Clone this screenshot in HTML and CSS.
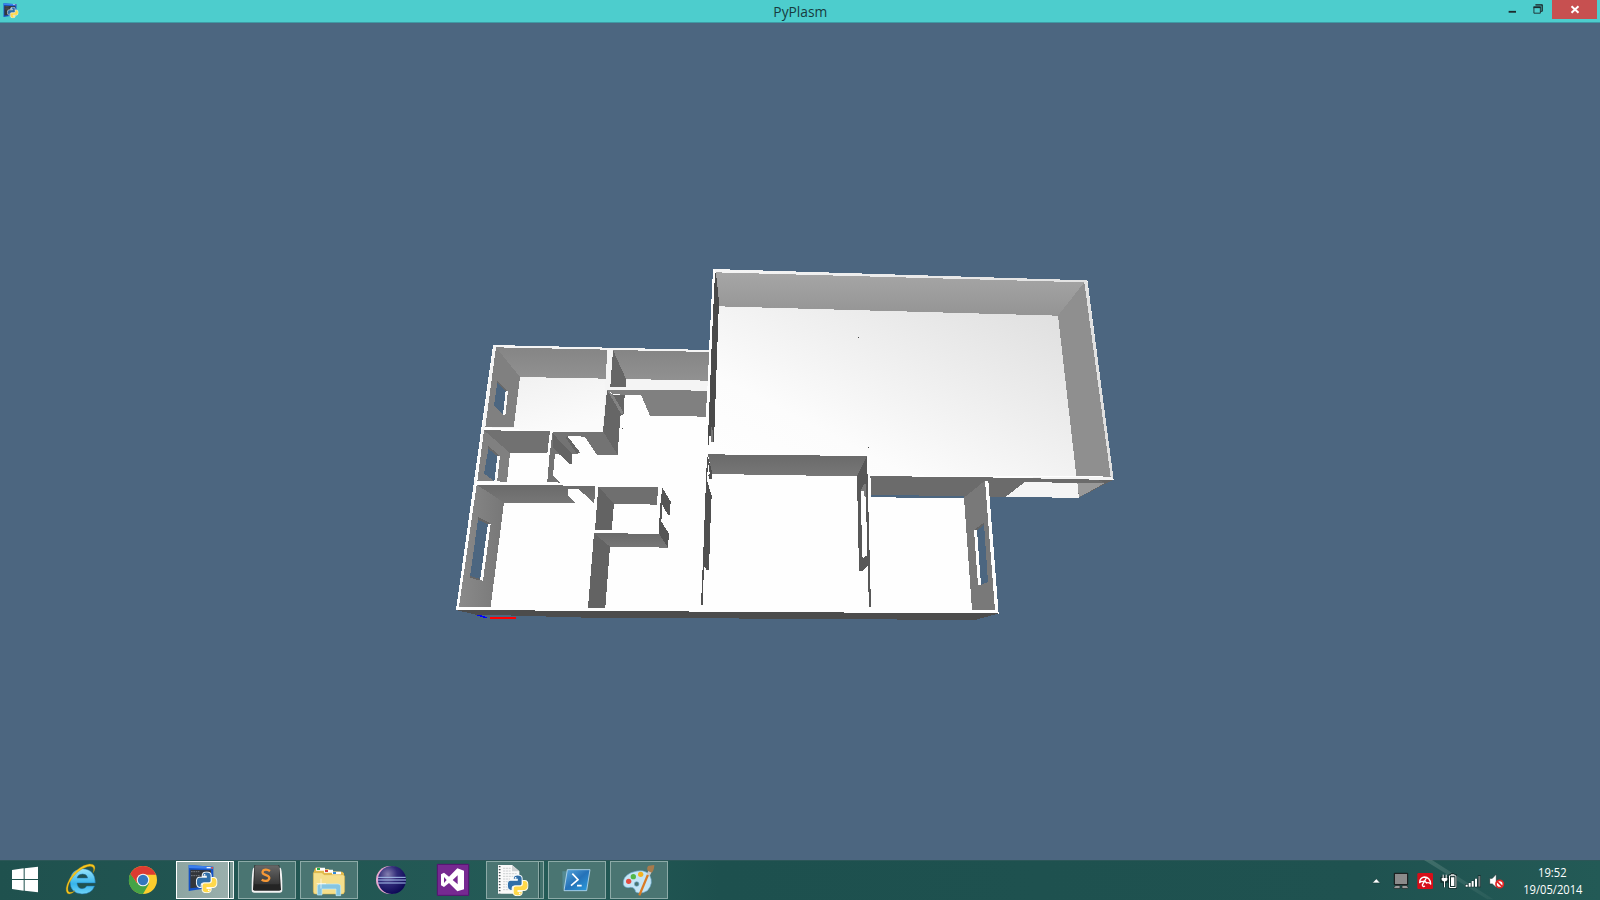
FILE: index.html
```html
<!DOCTYPE html>
<html lang="en">
<head>
<meta charset="utf-8">
<title>PyPlasm</title>
<link rel="stylesheet" href="styles.css">
</head>
<body>
<svg width="0" height="0" class="defs">
  <defs>
    <symbol id="snakes" viewBox="0 0 64 64">
      <path fill="#2f6ea8" stroke="#f2f8fa" stroke-width="3" d="M19 13q0-11 13-11t13 10v16q0 6-6 6H23q-7 0-7 7v6h-4Q2 46 2 31t10-14h19v-3H19z"/>
      <path fill="#ffd84a" stroke="#fffbe8" stroke-width="3" d="M46 18h6q10 0 10 14t-10 15H33v3h12v3q0 9-13 9t-13-9V41q0-7 7-7h13q7 0 7-7z"/>
      <circle cx="26" cy="10" r="2.5" fill="#fff"/><circle cx="38" cy="55" r="2.5" fill="#fff"/>
    </symbol>
    <symbol id="console" viewBox="0 0 84 84">
      <path fill="#1552c4" d="M3 2l74 5v62L3 80z"/>
      <path fill="#3b80ee" d="M3 2l74 5v7L3 11z"/>
      <path fill="#33363a" d="M8 16l62 2v46L8 72z"/>
      <path stroke="#777b80" stroke-width="3" fill="none" stroke-dasharray="5 2" d="M10 22h25M10 34h26"/>
      <path fill="#f3f6fb" d="M57 8h12v4H57z"/><path fill="#e64b37" d="M71 8h5v5h-5z"/>
    </symbol>
  </defs>
</svg>

<header class="titlebar">
  <svg class="app-icon" viewBox="0 0 48 48">
    <use href="#console" x="0" y="0" width="44" height="44"/>
    <use href="#snakes" x="12" y="11" width="35" height="35"/>
  </svg>
  <h1 class="title"><span>PyPlasm</span></h1>
  <div class="controls">
    <svg class="ctl" viewBox="0 0 62 19"><path fill="#1d2b2e" d="M17 11h8v2h-8z"/><path fill="none" stroke="#1d2b2e" d="M45.500 4.500h7v7M52.500 4.500v7h-2M45 4.500h8" transform="translate(1 0)"/><path fill="none" stroke="#1d2b2e" d="M43.500 7v6.500h7V7" transform="translate(1 0)"/><path fill="#1d2b2e" d="M44 6h8v2h-8z"/></svg>
    <span class="close"><svg viewBox="0 0 45 19"><path stroke="#fff" stroke-width="2" d="M19.500 6.200l7 6.600M26.500 6.200l-7 6.600"/></svg></span>
  </div>
</header>

<main class="viewport">
<svg class="scene" viewBox="0 23 1600 837" shape-rendering="crispEdges">
  <defs>
    <linearGradient id="floor" gradientUnits="userSpaceOnUse" x1="72" y1="580" x2="455" y2="-163"><stop offset="0" stop-color="#fefefe"/><stop offset=".25" stop-color="#fcfcfc"/><stop offset="1" stop-color="#e0e0e0"/></linearGradient>
    <linearGradient id="fa" x1="0" y1="0" x2=".4" y2="1"><stop offset="0" stop-color="#f1f1f1"/><stop offset="1" stop-color="#fbfbfb"/></linearGradient>
    <linearGradient id="back" x1="0" y1="0" x2="0" y2="1"><stop offset="0" stop-color="#a6a6a6"/><stop offset="1" stop-color="#949494"/></linearGradient>
    <linearGradient id="mid" x1="0" y1="0" x2="0" y2="1"><stop offset="0" stop-color="#858585"/><stop offset="1" stop-color="#919191"/></linearGradient>
    <linearGradient id="low" x1="0" y1="0" x2="0" y2="1"><stop offset="0" stop-color="#6a6a6a"/><stop offset="1" stop-color="#777"/></linearGradient>
    <linearGradient id="side" x1="0" y1="0" x2="1" y2="0"><stop offset="0" stop-color="#8a8a8a"/><stop offset="1" stop-color="#777"/></linearGradient>
    <linearGradient id="rim" x1="0" y1="0" x2="1" y2="0"><stop offset="0" stop-color="#f5f5f5"/><stop offset="1" stop-color="#e0e0e0"/></linearGradient>
  </defs>

  <!-- slab and front face -->
  <path fill="#fefefe" d="M493 345L709 350.500 713 269 1087.500 280.500 1113.500 479.500 988 478 998.500 613.500 456 610z"/>
  <path fill="#4c4c4c" d="M456 610L998.500 613.500 975 620 581 617.500 475 614.500z"/>

  <!-- large hall and outer right wing -->
  <g transform="translate(690 260) scale(.333333)">
    <path fill="url(#rim)" d="M70 27L1192 61 1271 659 1262 650 1182 67 78 37z"/>
    <path fill="url(#floor)" d="M87 139L1104 167 1159 648 540 646 531 586 72 580 72 545z"/>
    <path fill="url(#back)" d="M78 37L1183 67 1104 167 87 139z"/>
    <path fill="#8f8f8f" d="M1183 67L1262 650 1159 648 1104 167z"/>
    <path fill="#4a4a4a" d="M75 38h3L87 125 86 150 72 545h-8L60 515 56 555h-3L58 440 66 230z"/>
    <path fill="#777" d="M62 492L70 520v25h-7z"/>
    <path fill="#444" d="M504 231h3v3h-3zM534 561h3v3h-3z"/>
    <path fill="#6b6b6b" d="M540 648L1029 654 1222 659 1270 659 1165 713 1160 668 1003 667 948 711H898L822 713 540 707z"/>
    <path fill="#4c6680" d="M897 711H1165V730H897z"/>
    <path fill="#f4f4f4" d="M1003 667L1162 668 1167 714 948 710z"/>
    <path fill="#999" d="M1162 668L1245 669 1167 712z"/>
    <path fill="#626262" d="M1222 659h48L1167 713 1245 669z"/>
    <path fill="#f4f4f4" d="M1029 651L1262 650 1271 659H1220L1029 655z"/>
  </g>

  <!-- upper left rooms -->
  <g transform="translate(440 330) scale(.333333)">
    <path fill="#f4f4f4" d="M160 45L807 60V66L519 60 511 171 558 170V147L804 152 801 183 501 179 490 300 134 292 98 480H104z"/>
    <path fill="url(#fa)" d="M240 141L497 146 488 306 221 298z"/>
    <path fill="url(#mid)" d="M168 52L502 59 497 146 240 141z"/>
    <path fill="#808080" d="M168 52L240 141 221 292H136z"/>
    <path fill="#4c6680" d="M172 156L199 182 191 256 162 227z"/>
    <path fill="#fafafa" d="M197 183L204 183 196 257 189 255z"/>
    <path fill="#696969" d="M172 154L203 184H197L172 160z"/>
    <path fill="url(#mid)" d="M519 60L807 66 804 152 558 147z"/>
    <path fill="#666" d="M519 60L558 147V170H511z"/>
    <path fill="#808080" d="M501 179L801 182 798 260 630 257 603 195 519 193z"/>
    <path fill="#666" d="M501 180L519 194 554 195 551 253 541 257 533 374 489 306z"/>
    <path fill="#838383" d="M501 180L519 194 550 246V253H544z"/>
    <path fill="#717171" d="M132 301L330 303 322 370 210 369z"/>
    <path fill="#808080" d="M132 301L210 369 201 455 112 453z"/>
    <path fill="#4c6680" d="M146 352L174 378 165 455 132 431z"/>
    <path fill="#686868" d="M145 348L180 378H172L145 357z"/>
    <path fill="#fafafa" d="M172 378H180L171 457 163 455z"/>
    <path fill="#737373" d="M338 306H490L533 374H471L434 320 382 318 419 366V370L396 372V402H388L360 374 345 372 339 437 361 458 322 455 328 380z"/>
    <path fill="#646464" d="M338 310L396 372V402H388L360 374 338 350zM382 318L419 366 410 370 378 325z"/>
    <path fill="#444" d="M546 294h3v3h-3z"/>
  </g>

  <!-- lower left rooms -->
  <g transform="translate(440 470) scale(.333333)">
    <path fill="url(#low)" d="M110 44L350 46 465 49 463 101 416 57H384V77L405 98H192z"/>
    <path fill="url(#side)" d="M110 44L192 98 152 410H57z"/>
    <path fill="#4c6680" d="M115 142L147 162 123 331 90 321z"/>
    <path fill="#656565" d="M115 141L152 160 145 164 115 150zM90 318L121 327V332L90 323z"/>
    <path fill="#fefefe" d="M144 162H152L129 332 120 331z"/>
    <path fill="#6f6f6f" d="M475 50L654 51 651 104 522 101z"/>
    <path fill="#636363" d="M475 50L522 101 515 181 465 180zM462 190L510 230 496 413H444z"/>
    <path fill="url(#low)" d="M462 190L657 191 684 233 510 230z"/>
    <path fill="#555" d="M665 50L692 95 689 134H683L667 104 664 155 687 190 684 233 657 191 660 100H664z"/>
    <path fill="#00f" d="M112 435h14v3h9v3h6v4h-12v-3h-10v-3h-7z"/>
    <path fill="red" d="M149 441h79v6h-79z"/>
  </g>

  <!-- lower middle and right rooms -->
  <g transform="translate(690 440) scale(.333333)">
    <path fill="url(#low)" d="M54 43L531 48 501 109 66 102z"/>
    <path fill="#505050" d="M51 52H54L66 94V117H57L53 90 51 120 65 168 62 235 57 389H49L42 378 38 494H33L40 335 48 120z"/>
    <path fill="#fefefe" d="M55 72L59 100 54 106z"/>
    <path fill="#585858" d="M531 48L533 118 543 500H537L533 378 517 392H507L501 109z"/>
    <path fill="#fefefe" d="M513 152H522L528 140 531 346 520 354 516 348z"/>
    <path fill="#7b7b7b" d="M513 150L520 134 528 132V172L522 168V153H513z"/>
    <path fill="#fefefe" d="M533 48H540L543 171H535z"/>
    <path fill="#4c6680" d="M543 165L822 168V174L618 173V171H543z"/>
    <path fill="#fefefe" d="M884 122H895L926 521 915 511z"/>
    <path fill="#797979" d="M885 122L915 510H846L822 173z"/>
    <path fill="#4c6680" d="M882 250L894 426 873 435 861 268z"/>
    <path fill="#646464" d="M882 248V254L862 271H851z"/>
    <path fill="#fefefe" d="M852 269H861L873 435H864z"/>
  </g>
</svg>
</main>

<footer class="taskbar">
  <nav class="apps">
    <span class="slot start"><svg viewBox="0 33 144 114"><path fill="#fff" d="M36 60L71 55V87H36zM74 55L114 50V87H74zM36 90H71V122L36 117zM74 90H114V127L74 122z"/></svg></span>
    <span class="slot"><svg viewBox="156 33 174 114">
      <defs><linearGradient id="ie" x1="0" y1="0" x2="0" y2="1"><stop offset="0" stop-color="#9be6fb"/><stop offset=".6" stop-color="#36b4ec"/><stop offset="1" stop-color="#6fd3f7"/></linearGradient></defs>
      <path fill="url(#ie)" stroke="#1c6fa8" stroke-width="1.500" fill-rule="evenodd" d="M286 99H231Q233 116 246 116 256 116 260 108H284Q275 132 246 132 210 130 210 94 212 57 248 56 286 58 286 99zM231 84H263Q261 72 248 72 234 72 231 84z"/>
      <path fill="#f7c81f" stroke="#b98607" d="M280 68Q286 44 262 50 228 60 208 98 200 118 206 125 212 130 225 122 212 136 202 130 192 118 209 86 234 47 268 42 294 42 280 68z"/>
    </svg></span>
    <span class="slot"><svg viewBox="342 33 174 114">
      <circle cx="429" cy="90" r="42" fill="#fccd2d"/>
      <path fill="#45a346" d="M391 70Q380 95 394 114 408 132 429 132L447 101 429 90 411 100z"/>
      <path fill="#dd3b31" d="M391 72Q404 48 429 48 456 48 468 74H429L412 100z"/>
      <circle cx="429" cy="90" r="19" fill="#f4f4f4"/><circle cx="429" cy="90" r="15.500" fill="#3377bd"/>
    </svg></span>
    <span class="slot open stack active"><svg viewBox="528 33 174 114"><use href="#console" x="563" y="43" width="84" height="84"/><use href="#snakes" x="587" y="64" width="66" height="66"/></svg></span>
    <span class="slot open"><svg viewBox="714 33 174 114">
      <defs><linearGradient id="key" x1="0" y1="0" x2="0" y2="1"><stop offset="0" stop-color="#686868"/><stop offset="1" stop-color="#363636"/></linearGradient></defs>
      <path fill="#f3f3f3" d="M761 53Q755 55 755 120 755 128 763 128H839Q847 128 847 120 847 55 841 53z"/>
      <path fill="#242424" d="M763 46H838L843 118Q843 122 838 122H764Q759 122 759 118z"/>
      <path fill="url(#key)" d="M768 46H833Q837 46 837 51L839 99Q839 103 834 103H767Q763 103 763 99L764 51Q764 46 768 46z"/>
      <path fill="none" stroke="#f79836" stroke-width="7" d="M810 63Q799 56 790 61 784 69 793 73L804 78Q812 84 804 91 795 95 785 89"/>
    </svg></span>
    <span class="slot open"><svg viewBox="900 33 174 114">
      <path fill="#e3ba4b" d="M941 132V66L946 53H962L967 58H970L986 57 991 64 1027 65 1032 70V132z"/>
      <path fill="#fff" d="M948 53h27v9h-27zM972 59h27v9h-27zM996 65h27v9h-27z"/>
      <path fill="#29ad47" d="M951 54h9v6h-9z"/><path fill="#d3423a" d="M975 60h9v6h-9z"/><path fill="#2e8bdc" d="M999 66h9v6h-9z"/>
      <path fill="#f5df8c" stroke="#d5ad43" stroke-width="1.500" d="M940 68H966L972 74H1029L1034 78V126L1028 132H944L940 126z"/>
      <path fill="#85c5e2" stroke="#c6edfb" stroke-width="2" d="M952 135V110Q952 102 960 102H1014Q1022 102 1022 110V137H1008V117H966V135z"/>
      <path stroke="#fff" stroke-width="2" d="M950 101H978M963 86V116"/>
    </svg></span>
    <span class="slot"><svg viewBox="66 33 174 114">
      <defs><radialGradient id="ec" cx=".35" cy=".3" r=".75"><stop offset="0" stop-color="#8580b0"/><stop offset=".45" stop-color="#302a78"/><stop offset="1" stop-color="#0b0755"/></radialGradient></defs>
      <circle cx="150" cy="90" r="42" fill="#e8a9d0"/><circle cx="156" cy="90" r="42" fill="url(#ec)"/>
      <path stroke="#a9c4ef" stroke-width="3" d="M114 82H197M113 90H198M114 99H197"/>
    </svg></span>
    <span class="slot"><svg viewBox="252 33 174 114">
      <path fill="#762991" stroke="#571273" stroke-width="3" d="M292 43H386V136H292z"/>
      <path fill="#fff" fill-rule="evenodd" d="M352 55L372 62V118L352 124 327 99 312 111 303 106V73L312 68 327 80zM353 76L338 90 353 103zM312 81V99L320 90z"/>
    </svg></span>
    <span class="slot open stack"><svg viewBox="438 33 174 114">
      <path fill="#fafafa" d="M474 45H516L538 64V131H474z"/><path fill="#d0d3d4" d="M516 45V64H538z"/>
      <path stroke="#4b5658" stroke-width="5" stroke-dasharray="4 5" d="M479 48V130"/>
      <path stroke="#b8bdbe" stroke-width="2" stroke-dasharray="7 2" d="M489 55H512M489 63H512M489 71H530M489 79H520M489 87H510M489 95H506M489 103H504M489 111H506M489 119H515"/>
      <use href="#snakes" x="500" y="73" width="66" height="66"/>
    </svg></span>
    <span class="slot open"><svg viewBox="624 33 174 114">
      <defs><linearGradient id="ps" x1="0" y1="0" x2="1" y2="1"><stop offset="0" stop-color="#5aa7dd"/><stop offset=".5" stop-color="#2572b8"/><stop offset="1" stop-color="#2c9fe0"/></linearGradient></defs>
      <path fill="#5d9fb4" opacity=".5" d="M667 64H690L678 116H668z"/>
      <path fill="url(#ps)" stroke="#bcdcf0" stroke-width="2.500" d="M682 59H750L740 122H672z"/>
      <path fill="none" stroke="#fff" stroke-width="5" d="M697 71L714 89 693 107M711 107H725"/>
    </svg></span>
    <span class="slot open"><svg viewBox="810 33 174 114">
      <path fill="#c5e6f6" stroke="#71acd0" stroke-width="2" fill-rule="evenodd" d="M850 103Q847 80 873 68 914 53 929 76 942 100 922 122 902 134 887 126 885 112 872 112 854 116 850 103zM883 102A7 7 0 1 0 897 102 7 7 0 1 0 883 102z"/>
      <circle cx="866" cy="94" r="8" fill="#e44c41"/><circle cx="880" cy="80" r="8" fill="#53b848"/><circle cx="902" cy="73" r="8" fill="#f3b221"/>
      <path stroke="#d97b25" stroke-width="7" d="M898 136L924 74"/><path fill="#c9c9c9" d="M920 73L925 62 935 66 929 78z"/>
      <path fill="#a77b4c" d="M923 62Q919 51 926 47L943 45Q942 62 935 68z"/>
    </svg></span>
  </nav>
  <div class="tray">
    <svg class="tray-icons" viewBox="60 30 420 120">
      <defs><linearGradient id="streak" x1="0" y1="0" x2="1" y2="1"><stop offset="0" stop-color="#8aa9a2" stop-opacity=".3"/><stop offset="1" stop-color="#8aa9a2" stop-opacity=".08"/></linearGradient></defs>
      <path fill="url(#streak)" d="M222 30H246L430 148H412z"/>
      <path fill="#fff" stroke="#183f3e" stroke-width="2" d="M67 99L79 86 91 99z"/>
      <path fill="#8b8b8b" stroke="#111" stroke-width="3" d="M133 70H173V104H133z"/><path fill="#aaa" stroke="#222" stroke-width="2" d="M132 112L137 107H150V115H133zM156 107H169L175 112 172 115H156z"/>
      <rect x="202" y="69" width="47" height="48" rx="4" fill="#d60e19"/>
      <path fill="none" stroke="#fff" stroke-width="4" stroke-linejoin="round" d="M209 98Q209 83 223 81 240 81 242 102 236 96 230 99 224 91 217 95 212 93 209 98z"/>
      <path fill="none" stroke="#fff" stroke-width="4" d="M229 84L217 105Q218 112 225 108"/>
      <g fill="none" stroke="#15302f" stroke-width="8"><path d="M299 77H317V112H299zM275 85H291V94H275zM283 92V112M279 75V85M288 75V85M302 73H313"/></g>
      <path fill="none" stroke="#fff" stroke-width="3" d="M298.500 77.500H317.500V112.500H298.500zM303 74.500H313M283.500 92V112M279.500 74V84M288.500 74V84"/><path fill="#15302f" d="M300 79h16v32h-16z"/><path fill="#fff" d="M303 82h10v26h-10zM275 84h17v6l-4 4h-9l-4-4z"/>
      <path stroke="#15302f" stroke-width="9" d="M350 112V102M359 112V98M368 112V92M378 112V86M388 112V76"/>
      <path stroke="#fff" stroke-width="6" d="M350 110V104M359 110V99M368 110V93M378 110V86"/><path stroke="#777f80" stroke-width="6" d="M388 110V78"/>
      <path fill="#fff" stroke="#15302f" stroke-width="2" d="M419 85H427L439 72V113L427 102H419z"/>
      <circle cx="449" cy="102" r="11" fill="#fff" stroke="#e32525" stroke-width="5"/><path stroke="#e32525" stroke-width="5" d="M441 94L457 110"/>
    </svg>
    <div class="clock"><span class="time">19:52</span><span class="date">19/05/2014</span></div>
  </div>
</footer>
</body>
</html>
```
FILE: styles.css
```css
* { box-sizing: border-box; }
body {
  margin: 0;
  width: 1600px;
  height: 900px;
  display: flex;
  flex-direction: column;
  overflow: hidden;
  background: #4c6680;
  font-family: "Open Sans", "Noto Sans", sans-serif;
}
svg { display: block; }
.defs { display: none; }
.titlebar {
  height: 23px;
  flex: none;
  display: grid;
  grid-template-columns: 107px 1fr 107px;
  background: #4dcdcd;
  border-bottom: 1px solid #3f9aa5;
}
.app-icon { width: 16px; height: 16px; margin: 3px 0 0 3px; }
.title {
  margin: 0;
  text-align: center;
  font-size: 15px;
  line-height: 23px;
  font-weight: 400;
  color: #173b3e;
}
.title span { display: inline-block; transform: scaleX(.92); }
.controls { display: flex; justify-content: flex-end; padding-right: 3px; }
.ctl { width: 62px; height: 19px; margin-right: 2px; }
.close { width: 45px; height: 19px; background: #c75050; }
.close svg { width: 45px; height: 19px; }
.viewport { height: 837px; flex: none; }
.scene { width: 1600px; height: 837px; }
.taskbar {
  height: 40px;
  flex: none;
  display: flex;
  justify-content: space-between;
  padding-top: 1px;
  background: linear-gradient(90deg, #1f514e, #245b57 35%, #1d504e 45%, #1f5250 85%, #235a56);
  box-shadow: inset 0 1px #2c5657;
}
.apps { display: flex; gap: 4px; }
.slot { width: 58px; height: 38px; }
.slot svg { width: 100%; height: 38px; }
.slot.start { width: 48px; }
.open { background: #4a7572; box-shadow: inset 0 0 0 1px #8caaa7; }
.stack {
  background: linear-gradient(90deg, #4a7572 52px, #8caaa7 52px, #8caaa7 53px, #234c4a 53px, #234c4a 54px, #41706c 54px);
  border-right: 1px solid #8caaa7;
  box-shadow: inset 0 1px #8caaa7, inset 0 -1px #8caaa7, inset 1px 0 #8caaa7;
}
.slot.stack svg { width: 58px; }
.active {
  background: linear-gradient(90deg, #8da5a2, #9aafac 52px, #fff 52px, #fff 53px, #234c4a 53px, #234c4a 54px, #7f9c98 54px);
  border-color: #e8efee;
  box-shadow: inset 0 1px #fff, inset 0 -1px #fff, inset 1px 0 #fff;
}
.tray { display: flex; }
.tray-icons { width: 140px; height: 40px; margin-top: -1px; }
.clock {
  width: 90px;
  display: flex;
  flex-direction: column;
  align-items: center;
  padding: 3px 5px 0 0;
  color: #fff;
  font-size: 12px;
  line-height: 17px;
}
.time, .date { transform: scaleX(.93); }
```
